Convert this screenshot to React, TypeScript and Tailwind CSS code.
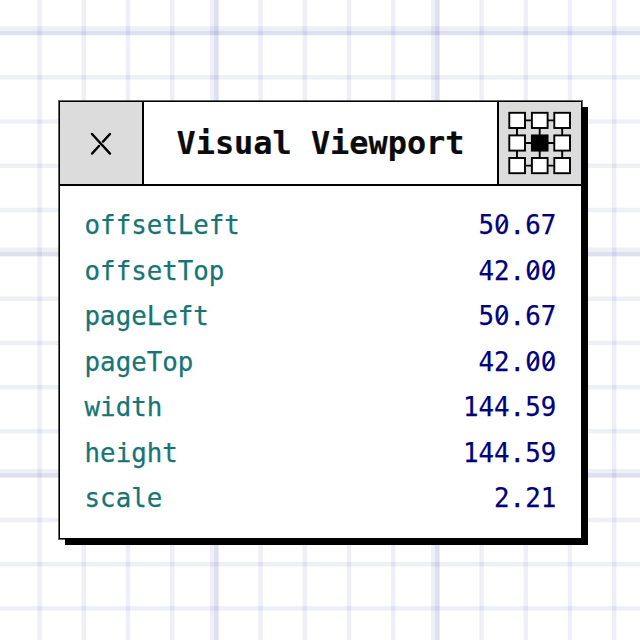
import React from "react";

const verticals = [37.4, 81.6, 125.8, 170, 214.2, 258.4, 302.6, 346.8, 391, 435.2, 479.4, 523.6, 567.8, 612];
const horizontals = [31, 75.2, 119.4, 163.6, 207.8, 252, 296.5, 340.7, 385, 429, 473.2, 517.8, 562, 606.2];

const rows: [string, string][] = [
  ["offsetLeft", "50.67"],
  ["offsetTop", "42.00"],
  ["pageLeft", "50.67"],
  ["pageTop", "42.00"],
  ["width", "144.59"],
  ["height", "144.59"],
  ["scale", "2.21"],
];

function GraphPaper() {
  return (
    <svg className="absolute inset-0" width="640" height="640" fill="#000882" fillOpacity="0.065">
      {verticals.map((x) => (
        <rect key={x} x={x} y="0" width="4.4" height="640" />
      ))}
      {horizontals.map((y) => (
        <rect key={y} x="0" y={y} width="640" height="4.4" />
      ))}
      {[210, 431].map((x) => (
        <rect key={x} x={x} y="0" width="8.7" height="640" />
      ))}
      {[26.3, 247.6, 469].map((y) => (
        <rect key={y} x="0" y={y} width="640" height="8.7" />
      ))}
    </svg>
  );
}

function AnchorIcon() {
  const cols = [509.3, 531.9, 554.3];
  const lines = [113.4, 136, 158.6];
  return (
    <svg width="64" height="64" viewBox="508 111.6 64 64" stroke="#000" strokeWidth="1.9">
      <path d="M517 121H562M517 143.6H562M517 166.2H562M517 121V166M539.7 121V166M562.2 121V166" />
      {lines.map((y, r) =>
        cols.map((x, c) => (
          <rect key={`${r}-${c}`} x={x} y={y} width="15.7" height="15.2" fill={r === 1 && c === 1 ? "#000" : "#fff"} />
        )),
      )}
    </svg>
  );
}

// Digits are monospaced; zeros get a diagonal slash through the counter.
function Value({ text }: { text: string }) {
  return (
    <>
      {text.split("").map((ch, i) =>
        ch === "0" ? (
          <span key={i} className="relative">
            0
            <svg className="absolute left-0 top-[5px]" width="16" height="20" viewBox="0 0 16 20" fill="none">
              <ellipse cx="7.8" cy="10" rx="2.8" ry="5.8" fill="#fff" />
              <path d="M4.3 15L11.3 5" stroke="#00007b" strokeWidth="2" />
            </svg>
          </span>
        ) : (
          ch
        ),
      )}
    </>
  );
}

export default function App() {
  return (
    <main className="relative h-[640px] w-[640px] overflow-hidden bg-white pl-[59px] pt-[101px] font-['DejaVu_Sans_Mono',monospace]">
      <GraphPaper />
      <section className="relative h-[438px] w-[523px] border-[1.7px] border-black bg-white shadow-[6px_6px_0_#000] outline-[0.7px] outline-black/60">
        <header className="flex h-[84px] border-b-2 border-black">
          <button className="flex w-[84px] items-center justify-center border-r-2 border-black bg-[#dcdcdc]">
            <svg className="mt-px" width="22" height="24" viewBox="0 0 22 24" fill="none" stroke="#000" strokeWidth="2.4" strokeLinecap="round">
              <path d="M2 2L20 21.6M20 2L13 9.6M9 14L2 21.6" />
            </svg>
          </button>
          <h1 className="flex flex-1 items-center justify-center whitespace-pre pt-px text-[31.9px] font-bold leading-none text-[#0b0b0b] [-webkit-text-stroke:0.2px]">Visual Viewport</h1>
          <div className="flex w-[84px] items-center justify-center border-l-2 border-black bg-[#dcdcdc]">
            <AnchorIcon />
          </div>
        </header>
        <dl className="pl-[24.6px] pr-[24.8px] pt-[17px] text-[25.8px] leading-[45.5px] [-webkit-text-stroke:0.25px]">
          {rows.map(([name, value]) => (
            <div key={name} className="flex h-[45.5px] justify-between">
              <dt className="text-[#167574]">{name}</dt>
              <dd className="text-[#00007b]">
                <Value text={value} />
              </dd>
            </div>
          ))}
        </dl>
      </section>
    </main>
  );
}
